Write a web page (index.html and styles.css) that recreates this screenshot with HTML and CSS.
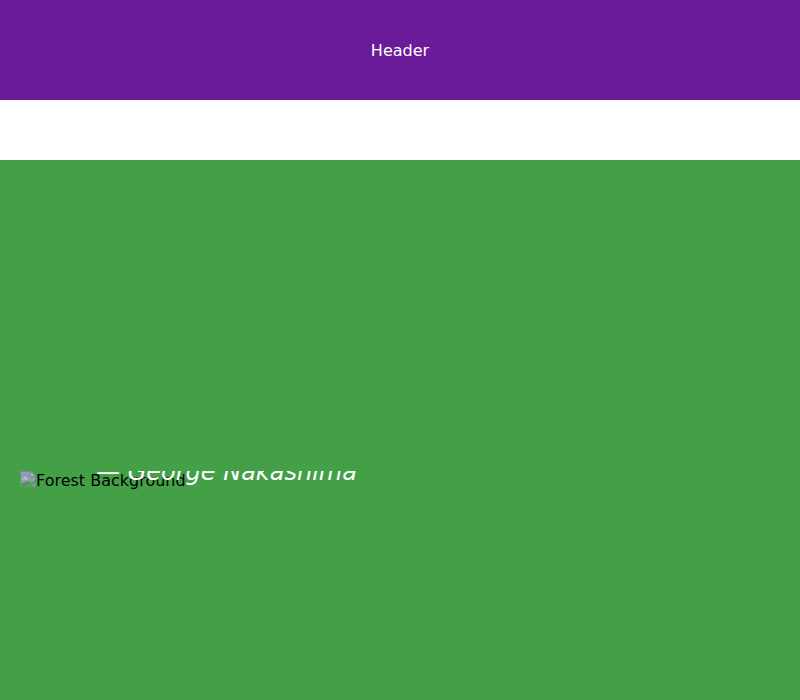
FILE: index.html
```html
<!DOCTYPE html>
<html lang="en">
<head>
<meta charset="utf-8">
<title>Forest</title>
<link rel="stylesheet" href="styles.css">
</head>
<body>
<header class="header">Header</header>
<main class="parallax">
  <div class="group">
    <div class="background">
      <svg class="broken" width="16" height="16" viewBox="0 0 16 16">
        <path d="M0 0H11L16 5V8L8 16H0z" fill="#8f9bb8"/>
        <path d="M2 8.500Q2.500 6.500 4 6.500Q5 4.500 6.500 6.500Q8 7 8 8.500z" fill="#bcbfc6"/>
        <path d="M1 15V13.500Q5 9.500 8 10.500L12 11L7.500 15.500z" fill="#4a9c42"/>
        <path d="M16 10.500V16H10.500z" fill="#8f9bb8"/>
        <path d="M10.500 1V5.500H15z" fill="#b9bbc0"/>
        <path d="M8 15.500H.5V.5H10.500L15.500 5.500V8.500M10.500.5V5.500H15.500M15.500 11V15.500H11" fill="none" stroke="#85868c"/>
      </svg><span>Forest Background</span>
    </div>
    <div class="quote">— George Nakashima</div>
  </div>
</main>
</body>
</html>
```
FILE: styles.css
```css
body {
  margin: 0;
  height: 700px;
  overflow: hidden;
  font: 16px/19px "DejaVu Sans", sans-serif;
}
.header {
  height: 100px;
  display: flex;
  align-items: center;
  justify-content: center;
  background: #6a1b9a;
  color: #fff;
}
.parallax {
  margin-top: 60px;
  height: 540px;
  background: #43a047;
}
.group {
  position: relative;
  padding: 311px 20px 0;
}
.quote {
  position: absolute;
  left: 96px;
  top: 311px;
  height: 40px;
  overflow: hidden;
  color: #fff;
  font-size: 24px;
  font-style: italic;
  line-height: 2px;
  white-space: nowrap;
}
.background {
  display: flex;
  color: #000;
}
```
